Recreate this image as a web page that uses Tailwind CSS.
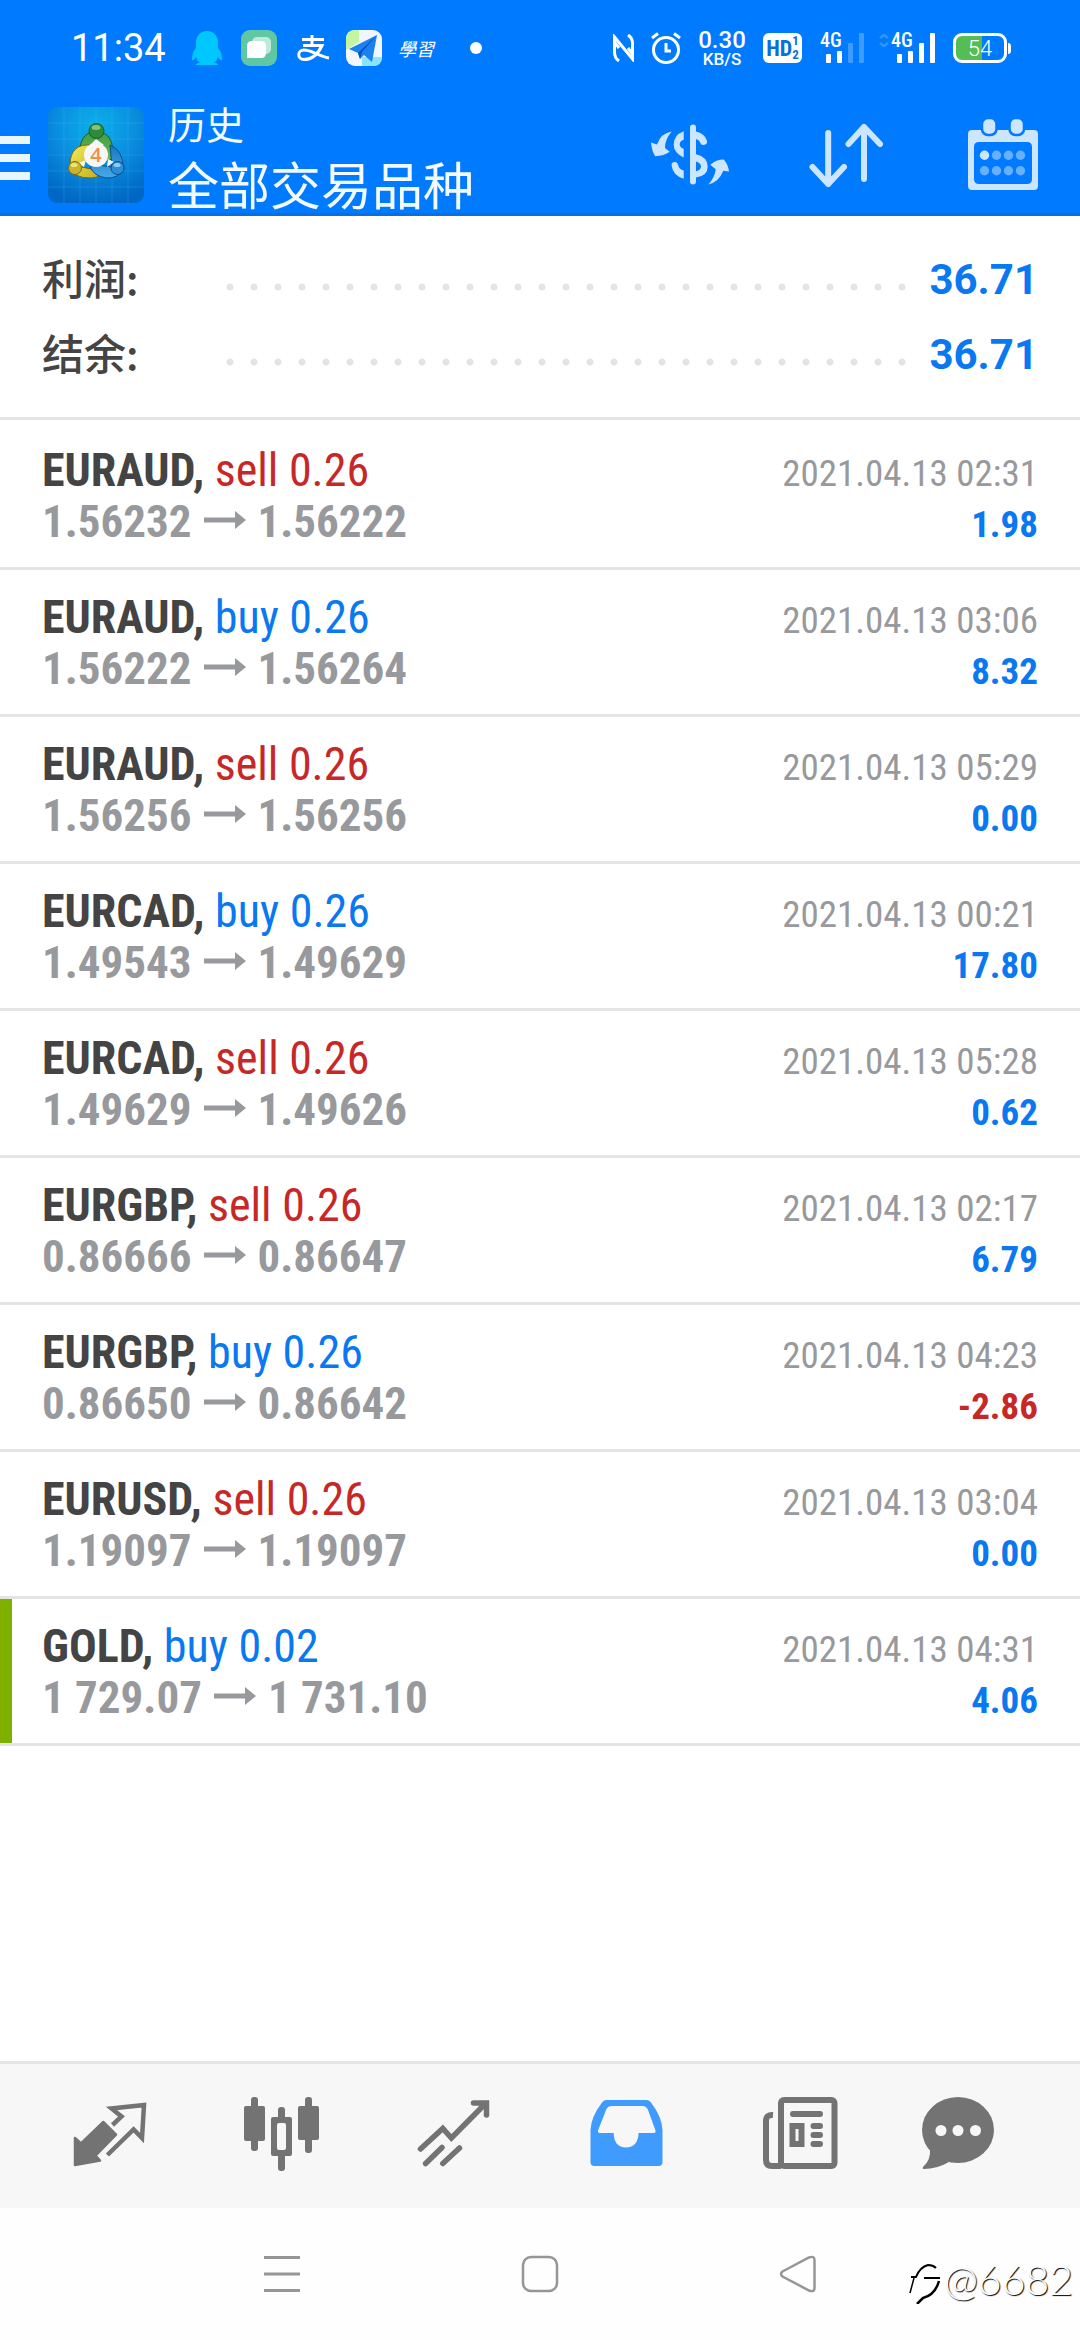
<!DOCTYPE html>
<html lang="zh-CN">
<head>
<meta charset="utf-8">
<meta name="viewport" content="width=device-width, initial-scale=1">
<title>历史</title>
<script src="https://cdn.jsdelivr.net/npm/@tailwindcss/browser@4"></script>
</head>
<body class="flex min-h-screen flex-col bg-white font-['Roboto','Noto_Sans_CJK_SC',sans-serif] text-[#444]">

<svg class="hidden">
  <symbol id="to" viewBox="0 0 42 18"><path d="M0 6.500H31V0L42 9L31 18V11.500H0Z" fill="currentColor"/></symbol>
</svg>

<header class="border-b-3 border-[#0a6fdd] bg-[#007aff] text-white">
  <!-- status bar -->
  <div class="flex h-24 items-center pr-[69px] pl-[71px]">
    <span class="w-[121px] text-[38px]">11:34</span>
    <svg class="mr-[19px] h-[34px] w-[30px]" viewBox="0 0 30 34"><path d="M15 0C8 0 4 5 4 12V17C1 20 0 24 0 29C1 30 3 28 4 26C5 29 6 31 8 31.500C5 32 4 33 4 34H26C26 33 25 32 22 31.500C24 31 25 29 26 26C27 28 29 30 30 29C30 24 29 20 26 17V12C26 5 22 0 15 0Z" fill="#00c8ff"/></svg>
    <svg class="mr-5 size-9" viewBox="0 0 36 36"><rect width="36" height="36" rx="9" fill="#5fc7a4"/><rect x="11" y="7" width="19" height="17" rx="5" fill="#bfe9db"/><path d="M11 11H20Q25 11 25 16V23Q25 28 20 28H6V16Q6 11 11 11Z" fill="#fff"/></svg>
    <svg class="mr-4 h-[26px] w-[33px]" viewBox="0 0 33 26" fill="none" stroke="#fff" stroke-width="3"><path d="M5 4.500H27M15 0V10M6 10.500H25C22 17 16 24.500 7 24.500C0 24.500 0 15 7 15C15 15 21 21 32 23"/></svg>
    <svg class="mr-4 size-9" viewBox="0 0 36 36"><rect width="36" height="36" rx="9" fill="#f1f6fb"/><path d="M9 0H13V12L0 20V9Q0 0 9 0Z" fill="#c3f5a0"/><path d="M26 27H36Q36 36 27 36H16V27Z" fill="#8be4ff"/><path d="M31 5L3 19L12 23L14 29L18 25L26 32Z" fill="#1a82ee"/><path d="M31 5L12 23L14 29L16 22Z" fill="#0a4fc4"/></svg>
    <span class="mr-9 text-[18px] italic font-['Noto_Sans_CJK_TC',sans-serif]">學習</span>
    <span class="size-3 rounded-full bg-white"></span>
    <div class="ml-auto flex items-center">
      <svg class="mr-[17px] h-7 w-[21px]" viewBox="0 0 21 28" fill="none" stroke="#fff" stroke-width="3"><path d="M6 27Q1.500 24 1.500 18V3L19.500 25V9Q19.500 4 15 1"/><path d="M6 14L1.500 8M15 14L19.500 20"/></svg>
      <svg class="mr-[15px] h-8 w-[30px]" viewBox="0 0 30 32" fill="none" stroke="#fff" stroke-width="3"><circle cx="15" cy="18" r="12.500"/><path d="M15 11V19H20M1 6L7 1.500M29 6L23 1.500"/></svg>
      <div class="mr-[15px] flex w-[52px] flex-col items-center font-medium"><span class="text-[24px] leading-[22px]">0.30</span><span class="text-[17px] leading-[17px]">KB/S</span></div>
      <div class="mr-[18px] flex h-[30px] w-[39px] items-center justify-center rounded-md bg-white font-bold text-[#0a6fdd] font-['Roboto_Condensed',sans-serif]"><span class="text-[22px]">HD</span><span class="flex flex-col text-[13px] leading-[14px]"><span>1</span><span>2</span></span></div>
      <div class="relative mr-[14px] h-[30px] w-[45px]"><span class="absolute -top-px left-0 font-['Roboto_Condensed',sans-serif] text-[20px] leading-4 font-medium">4G</span>
        <svg class="h-[30px] w-[45px]" viewBox="0 0 45 30" fill="#fff"><rect x="6" y="21" width="5" height="9" rx="1"/><rect x="17" y="18" width="5" height="12" rx="1"/><rect x="28" y="10" width="5" height="20" rx="1" opacity=".25"/><rect x="39" width="5" height="30" rx="1" opacity=".25"/></svg></div>
      <div class="relative mr-[17px] h-[30px] w-[57px]"><span class="absolute -top-px left-3 font-['Roboto_Condensed',sans-serif] text-[20px] leading-4 font-medium">4G</span>
        <svg class="h-[30px] w-[57px]" viewBox="0 0 57 30" fill="#fff"><path d="M1 5L5 2L9 5M1 10L5 13L9 10" fill="none" stroke="#339" stroke-opacity="0"/><path d="M1 5L5 2L9 5M1 10L5 13L9 10" fill="none" stroke="#3395ff" stroke-width="2.500"/><rect x="18" y="21" width="5" height="9" rx="1"/><rect x="29" y="18" width="5" height="12" rx="1"/><rect x="40" y="10" width="5" height="20" rx="1"/><rect x="51" width="5" height="30" rx="1"/></svg></div>
      <div class="flex items-center gap-px"><span class="flex h-[30px] w-[54px] items-center justify-center rounded-[9px] border-3 border-white bg-linear-to-r from-[#55bd55] from-54% to-[#007aff] to-54% text-[22px] font-light">54</span><span class="h-[11px] w-[3px] rounded-r bg-white"></span></div>
    </div>
  </div>
  <!-- app bar -->
  <div class="flex h-[117px] items-center pr-[42px]">
    <button class="mr-[18px] flex flex-col gap-[10px] pt-[6px]" aria-label="菜单"><span class="h-2 w-[30px] bg-[#eaf6ff]"></span><span class="h-2 w-[30px] bg-[#eaf6ff]"></span><span class="h-2 w-[30px] bg-[#eaf6ff]"></span></button>
    <svg class="mr-6 size-24" viewBox="0 0 96 96">
      <defs>
        <radialGradient id="bg" cx=".5" cy=".2" r=".8"><stop offset="0" stop-color="#0ab0ea"/><stop offset=".5" stop-color="#0a8fe0"/><stop offset="1" stop-color="#0068c4"/></radialGradient>
        <linearGradient id="g" x2="0" y2="1"><stop stop-color="#3f9a45"/><stop offset="1" stop-color="#6fc04f"/></linearGradient>
        <linearGradient id="y" x2="1" y2="1"><stop stop-color="#f3ea5a"/><stop offset="1" stop-color="#c4ad1e"/></linearGradient>
        <linearGradient id="b" x2="0" y2="1"><stop stop-color="#1878c4"/><stop offset="1" stop-color="#48a9e6"/></linearGradient>
      </defs>
      <rect width="96" height="96" rx="9" fill="url(#bg)"/>
      <path d="M16 0V96M32 0V96M48 0V96M64 0V96M80 0V96M0 16H96M0 32H96M0 48H96M0 64H96M0 80H96" stroke="#5cc4ff" stroke-opacity=".22"/>
      <g stroke-width="1">
        <path d="M32 50Q30 26 48 24Q68 26 64 52L54 56L48 34L38 44Z" fill="url(#g)" stroke="#1d5c2a"/>
        <path d="M44 38Q22 36 22 58Q24 72 44 71Q54 70 52 64L34 60L40 48Z" fill="url(#y)" stroke="#6f6412"/>
        <path d="M62 38Q76 44 75 62Q70 72 58 71Q46 69 42 60L50 58L64 60Z" fill="url(#b)" stroke="#0d4c86"/>
        <path d="M42 38L48 32L56 38Z" fill="#eefaff"/><path d="M30 56L36 60L38 53Z" fill="#fffbe0"/><path d="M66 55L59 60L60 52Z" fill="#e8f7ff"/>
        <circle cx="48.500" cy="24" r="7.500" fill="#2f8a3c" stroke="#1d5c2a"/><ellipse cx="48" cy="20.500" rx="4.500" ry="2.500" fill="#a6dba0" opacity=".7"/>
        <circle cx="27" cy="61" r="6.500" fill="#c9b42c" stroke="#7a6d14"/><ellipse cx="26" cy="58" rx="3.500" ry="2" fill="#fff7a0" opacity=".7"/>
        <circle cx="69.500" cy="61" r="6.500" fill="#2d8ed8" stroke="#0d4c86"/><ellipse cx="69" cy="58" rx="3.500" ry="2" fill="#c0e6ff" opacity=".7"/>
      </g>
      <circle cx="48" cy="48" r="12" fill="#f7f7f7"/>
      <text x="48" y="55" text-anchor="middle" font-family="Open Sans, sans-serif" font-weight="600" font-size="20" fill="#f09040">4</text>
    </svg>
    <div class="flex flex-1 flex-col font-['Noto_Sans_CJK_SC',sans-serif] text-[#f2faff]"><span class="text-[38px] leading-14">历史</span><h1 class="text-[51px] leading-16">全部交易品种</h1></div>
    <div class="flex items-center gap-[81px]">
      <button aria-label="货币"><svg class="block h-[66px] w-[78px] overflow-visible" viewBox="0 0 78 66" fill="#cce6ff"><rect x="40" y="2.500" width="6" height="60" rx="3"/><path d="M33.700 9.200Q23.700 13 23.700 22.500Q23.700 31 33.700 35.500V27Q29.700 25 29.700 22.500Q29.700 19 33.700 17.800ZM21.700 44a3.200 3.200 0 0 1 6.300-1.500Q29 47.500 33.700 48.500V56.800Q23 53.500 21.700 44ZM46 32.200Q57.700 35 57.700 44.500Q57.700 54 46 55.500V49.200Q51 48 51 44.500Q51 41 46 39.500Z"/><path d="M45 13Q52 14.500 53.500 19.500" fill="none" stroke="#cce6ff" stroke-width="7" stroke-linecap="round"/><path d="M1 20.500L7 22.500Q11 11 21.700 9.500Q15 17 15 26L19.700 29.800Q14 34 5.300 34.200Q2 30 1 20.500ZM79 49.500L73.300 48.800Q69 60 58.300 62.500Q65 55 65.700 47.200L60.300 42.800Q66 37.500 73.700 37.500Q78 42 79 49.500Z"/></svg></button>
      <button aria-label="排序"><svg class="block h-[66px] w-[78px]" viewBox="0 0 78 66" fill="none" stroke="#cce6ff" stroke-width="6" stroke-linecap="round" stroke-linejoin="round"><path d="M19.200 11V62M3.500 45L19.200 62L35 45M55 57V5M39.500 22L55 5L71 22"/></svg></button>
      <button aria-label="日历"><svg class="block h-[71px] w-[70px]" viewBox="0 0 70 71"><path fill-rule="evenodd" d="M4 11H66Q70 11 70 15V67Q70 71 66 71H4Q0 71 0 67V15Q0 11 4 11ZM11 23Q6 23 6 28V60Q6 65 11 65H59Q64 65 64 60V28Q64 23 59 23Z" fill="#cce6ff"/><g fill="#cce6ff" stroke="#007aff" stroke-width="2.500"><rect x="14" y="-1" width="14.500" height="17" rx="6"/><rect x="41.500" y="-1" width="14.500" height="17" rx="6"/></g><circle cx="16.500" cy="36.300" r="4.700" fill="#cce6ff"/><g fill="#66b0ff"><circle cx="28.500" cy="36.300" r="4.700"/><circle cx="40.500" cy="36.300" r="4.700"/><circle cx="52.500" cy="36.300" r="4.700"/><circle cx="16.500" cy="51.700" r="4.700"/><circle cx="28.500" cy="51.700" r="4.700"/><circle cx="40.500" cy="51.700" r="4.700"/><circle cx="52.500" cy="51.700" r="4.700"/></g></svg></button>
    </div>
  </div>
</header>

<main class="flex-1">
  <!-- totals -->
  <dl class="flex flex-col border-b-3 border-[#e4e4e4] pt-[26px] pb-[25px] text-[42px] leading-[75px] font-medium">
    <div class="flex items-start pr-[42px] pl-[42px]"><dt class="w-44 font-['Noto_Sans_CJK_SC',sans-serif] leading-[70px]">利润:</dt><dd class="flex flex-1 items-center"><span class="mt-[14px] mr-3 h-6 flex-1 bg-[radial-gradient(circle,#e4e4e4_3px,transparent_4px)] bg-[length:24px_24px] bg-repeat-x"></span><span class="font-bold text-[#0a78f0]">36.71</span></dd></div>
    <div class="flex items-start pr-[42px] pl-[42px]"><dt class="w-44 font-['Noto_Sans_CJK_SC',sans-serif] leading-[70px]">结余:</dt><dd class="flex flex-1 items-center"><span class="mt-[14px] mr-3 h-6 flex-1 bg-[radial-gradient(circle,#e4e4e4_3px,transparent_4px)] bg-[length:24px_24px] bg-repeat-x"></span><span class="font-bold text-[#0a78f0]">36.71</span></dd></div>
  </dl>

  <!-- deals -->
  <ul class="pt-[3px] font-['Roboto_Condensed',sans-serif] text-[46px] leading-[51px]">
    <li class="border-b-3 border-[#e4e4e4] px-[42px] pt-[22px] pb-5">
      <div class="flex items-baseline justify-between"><span><b>EURAUD,</b> <span class="text-[#c62828]">sell 0.26</span></span><time class="text-[37px] leading-10 text-[#98999d]">2021.04.13 02:31</time></div>
      <div class="flex items-baseline justify-between font-bold"><span class="flex items-center gap-3 text-[45px] text-[#98999d]">1.56232<svg class="mb-1 h-[18px] w-[42px]"><use href="#to"/></svg>1.56222</span><span class="text-[37px] leading-10 text-[#0a78f0]">1.98</span></div>
    </li>
    <li class="border-b-3 border-[#e4e4e4] px-[42px] pt-[22px] pb-5">
      <div class="flex items-baseline justify-between"><span><b>EURAUD,</b> <span class="text-[#0a78f0]">buy 0.26</span></span><time class="text-[37px] leading-10 text-[#98999d]">2021.04.13 03:06</time></div>
      <div class="flex items-baseline justify-between font-bold"><span class="flex items-center gap-3 text-[45px] text-[#98999d]">1.56222<svg class="mb-1 h-[18px] w-[42px]"><use href="#to"/></svg>1.56264</span><span class="text-[37px] leading-10 text-[#0a78f0]">8.32</span></div>
    </li>
    <li class="border-b-3 border-[#e4e4e4] px-[42px] pt-[22px] pb-5">
      <div class="flex items-baseline justify-between"><span><b>EURAUD,</b> <span class="text-[#c62828]">sell 0.26</span></span><time class="text-[37px] leading-10 text-[#98999d]">2021.04.13 05:29</time></div>
      <div class="flex items-baseline justify-between font-bold"><span class="flex items-center gap-3 text-[45px] text-[#98999d]">1.56256<svg class="mb-1 h-[18px] w-[42px]"><use href="#to"/></svg>1.56256</span><span class="text-[37px] leading-10 text-[#0a78f0]">0.00</span></div>
    </li>
    <li class="border-b-3 border-[#e4e4e4] px-[42px] pt-[22px] pb-5">
      <div class="flex items-baseline justify-between"><span><b>EURCAD,</b> <span class="text-[#0a78f0]">buy 0.26</span></span><time class="text-[37px] leading-10 text-[#98999d]">2021.04.13 00:21</time></div>
      <div class="flex items-baseline justify-between font-bold"><span class="flex items-center gap-3 text-[45px] text-[#98999d]">1.49543<svg class="mb-1 h-[18px] w-[42px]"><use href="#to"/></svg>1.49629</span><span class="text-[37px] leading-10 text-[#0a78f0]">17.80</span></div>
    </li>
    <li class="border-b-3 border-[#e4e4e4] px-[42px] pt-[22px] pb-5">
      <div class="flex items-baseline justify-between"><span><b>EURCAD,</b> <span class="text-[#c62828]">sell 0.26</span></span><time class="text-[37px] leading-10 text-[#98999d]">2021.04.13 05:28</time></div>
      <div class="flex items-baseline justify-between font-bold"><span class="flex items-center gap-3 text-[45px] text-[#98999d]">1.49629<svg class="mb-1 h-[18px] w-[42px]"><use href="#to"/></svg>1.49626</span><span class="text-[37px] leading-10 text-[#0a78f0]">0.62</span></div>
    </li>
    <li class="border-b-3 border-[#e4e4e4] px-[42px] pt-[22px] pb-5">
      <div class="flex items-baseline justify-between"><span><b>EURGBP,</b> <span class="text-[#c62828]">sell 0.26</span></span><time class="text-[37px] leading-10 text-[#98999d]">2021.04.13 02:17</time></div>
      <div class="flex items-baseline justify-between font-bold"><span class="flex items-center gap-3 text-[45px] text-[#98999d]">0.86666<svg class="mb-1 h-[18px] w-[42px]"><use href="#to"/></svg>0.86647</span><span class="text-[37px] leading-10 text-[#0a78f0]">6.79</span></div>
    </li>
    <li class="border-b-3 border-[#e4e4e4] px-[42px] pt-[22px] pb-5">
      <div class="flex items-baseline justify-between"><span><b>EURGBP,</b> <span class="text-[#0a78f0]">buy 0.26</span></span><time class="text-[37px] leading-10 text-[#98999d]">2021.04.13 04:23</time></div>
      <div class="flex items-baseline justify-between font-bold"><span class="flex items-center gap-3 text-[45px] text-[#98999d]">0.86650<svg class="mb-1 h-[18px] w-[42px]"><use href="#to"/></svg>0.86642</span><span class="text-[37px] leading-10 text-[#c62828]">-2.86</span></div>
    </li>
    <li class="border-b-3 border-[#e4e4e4] px-[42px] pt-[22px] pb-5">
      <div class="flex items-baseline justify-between"><span><b>EURUSD,</b> <span class="text-[#c62828]">sell 0.26</span></span><time class="text-[37px] leading-10 text-[#98999d]">2021.04.13 03:04</time></div>
      <div class="flex items-baseline justify-between font-bold"><span class="flex items-center gap-3 text-[45px] text-[#98999d]">1.19097<svg class="mb-1 h-[18px] w-[42px]"><use href="#to"/></svg>1.19097</span><span class="text-[37px] leading-10 text-[#0a78f0]">0.00</span></div>
    </li>
    <li class="border-b-3 border-[#e4e4e4] px-[42px] pt-[22px] pb-5 shadow-[inset_12px_0_0_#7fb000]">
      <div class="flex items-baseline justify-between"><span><b>GOLD,</b> <span class="text-[#0a78f0]">buy 0.02</span></span><time class="text-[37px] leading-10 text-[#98999d]">2021.04.13 04:31</time></div>
      <div class="flex items-baseline justify-between font-bold"><span class="flex items-center gap-3 text-[45px] text-[#98999d]">1 729.07<svg class="mb-1 h-[18px] w-[42px]"><use href="#to"/></svg>1 731.10</span><span class="text-[37px] leading-10 text-[#0a78f0]">4.06</span></div>
    </li>
  </ul>
</main>

<nav class="grid grid-cols-6 justify-items-center border-t-3 border-[#e4e4e4] bg-[#f7f7f7] px-6 py-6 text-[#737373]">
  <button aria-label="行情"><svg class="block size-24" viewBox="0 0 96 96"><path d="M13 50L19 55.500L41.300 34L54 46.700L33.500 67.700L38 72.500L13 77Z" fill="currentColor" stroke="currentColor" stroke-width="2.500" stroke-linejoin="round"/><path d="M50.500 37L59.500 28.500L49.500 20.500L82 17L80 50L71.600 41.500L45.400 67" fill="none" stroke="currentColor" stroke-width="4.500"/></svg></button>
  <button aria-label="图表"><svg class="block size-24" viewBox="0 0 96 96" fill="currentColor"><rect x="10" y="18" width="21" height="35" rx="2"/><rect x="17" y="9" width="7" height="54" rx="3"/><rect x="64" y="18" width="21" height="34" rx="2"/><rect x="71" y="9" width="7" height="56" rx="3"/><rect x="44" y="19" width="7" height="64" rx="3"/><rect x="37" y="29" width="21" height="39" rx="2"/><rect x="43" y="35" width="9" height="27" rx="2" fill="#f7f7f7"/></svg></button>
  <button aria-label="交易"><svg class="block size-24" viewBox="0 0 96 96" fill="none" stroke="currentColor" stroke-width="5.500" stroke-linecap="round"><path d="M14.500 61L36.800 40.500L45.400 50L79 16M67.500 15H80.500V27"/><path d="M36 59.500L19.600 75.500M53.500 60L36.800 75.500"/></svg></button>
  <button class="text-[#409bff]" aria-label="历史" aria-current="page"><svg class="block size-24" viewBox="0 0 96 96" fill="currentColor"><path fill-rule="evenodd" d="M28 12H69Q71.500 12 73 14.500Q84 29 84.500 42V74Q84.500 78 80.500 78H16.500Q12.500 78 12.500 74V42Q13 29 24 14.500Q25.500 12 28 12ZM34 18Q29.500 18 28 22L20 42.500Q19.500 45 22 45H35.700C35.700 54 40 59.500 48 59.500S60.500 54 60.500 45H75.500Q78 45 77.500 42.500L70 22Q68.500 18 64 18Z"/></svg></button>
  <button aria-label="新闻"><svg class="block size-24" viewBox="0 0 96 96" fill="none" stroke="currentColor" stroke-width="6"><rect x="31" y="12" width="53.500" height="66" rx="3"/><path d="M23 27Q16 26.500 16 33V72Q16 78 22 78H31"/><rect x="42.500" y="38" width="9" height="18"/><path stroke-linecap="round" d="M43 26H70M63.500 38H70M63.500 47H70M63.500 56H70"/></svg></button>
  <button aria-label="消息"><svg class="block size-24" viewBox="0 0 96 96" fill="currentColor"><ellipse cx="36" cy="42" rx="36" ry="33"/><path d="M8 61Q9 72 1 79Q0 81 2 81Q15 81 27 74Z"/><g fill="#f7f7f7"><circle cx="19" cy="42.500" r="5.500"/><circle cx="36" cy="42.500" r="5.500"/><circle cx="53.500" cy="42.500" r="5.500"/></g></svg></button>
</nav>

<footer class="relative grid h-[132px] grid-cols-3 place-items-center bg-[#fefefe] px-[153px]">
  <button aria-label="最近任务"><svg class="block size-10" viewBox="0 0 40 40" fill="none" stroke="#969696" stroke-width="3"><path d="M2 3.500H38M2 20H38M2 36.500H38"/></svg></button>
  <button aria-label="主屏幕"><svg class="block size-10" viewBox="0 0 40 40" fill="none" stroke="#969696" stroke-width="2.500"><rect x="3" y="3" width="34" height="34" rx="8"/></svg></button>
  <button aria-label="返回"><svg class="block size-10" viewBox="0 0 40 40" fill="none" stroke="#969696" stroke-width="2.500"><path d="M4.500 17.500L31 3.500Q36.500 1.500 36.500 6V34Q36.500 38.500 31 36.500L4.500 22.500Q1.500 20 4.500 17.500Z"/></svg></button>
  <div class="absolute right-[7px] bottom-9 flex items-center">
    <svg class="mt-2 h-10 w-[38px]" viewBox="0 0 38 40" fill="none" stroke="#000" stroke-width="2"><path d="M5 13H10Q14 3 22 1Q27 1 30 4M18 14H34"/><path d="M33 17Q29 31 17 34L11 40" stroke-width="2.500"/><path d="M8 14L4 29" stroke-width="1.500"/></svg>
    <span class="font-['Lato',sans-serif] text-[41px] leading-[48px] font-light text-white [text-shadow:1px_1px_1px_#000]">@6682</span>
  </div>
</footer>
</body>
</html>
